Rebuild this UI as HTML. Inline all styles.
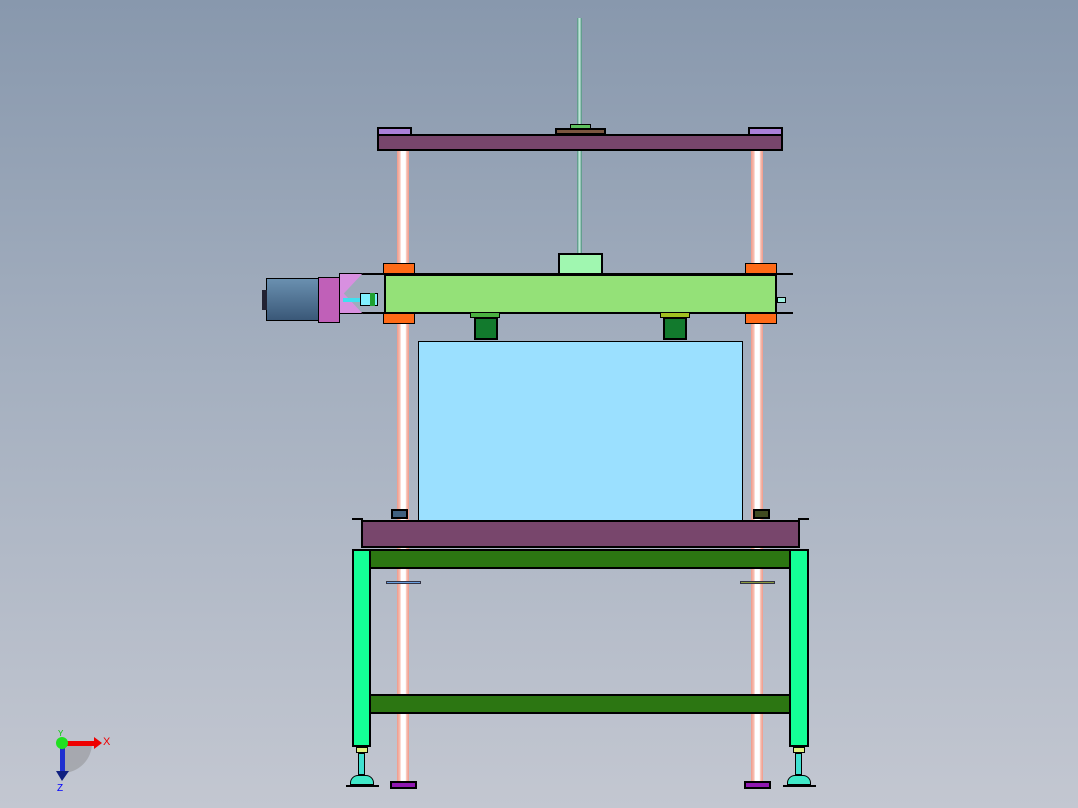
<!DOCTYPE html>
<html><head><style>
body{margin:0;width:1078px;height:808px;overflow:hidden;background:linear-gradient(#8898ad,#a4afbf 45%,#c3c7d1);position:relative;font-family:"Liberation Sans",sans-serif}
div{position:absolute;box-sizing:border-box}
.b{border:2px solid #000}
.col{width:12px;background:linear-gradient(90deg,#f09a8a 0,#f6c0b4 25%,#fff 35%,#fff 70%,#f6c0b4 80%,#f09a8a 100%)}
</style></head><body>
<!-- columns -->
<div class="col" style="left:397px;top:151px;height:632px"></div>
<div class="col" style="left:751px;top:151px;height:632px"></div>
<!-- center rod -->
<div style="left:577px;top:18px;width:5px;height:236px;background:linear-gradient(90deg,#4a8a7a,#c8f0e0,#4a8a7a)"></div>
<!-- top plate -->
<div class="b" style="left:377px;top:127px;width:35px;height:9px;background:#aa80d8"></div>
<div class="b" style="left:748px;top:127px;width:35px;height:9px;background:#aa80d8"></div>
<div class="b" style="left:570px;top:124px;width:21px;height:6px;background:#5fc060;border-width:1px"></div>
<div class="b" style="left:555px;top:128px;width:51px;height:7px;background:#7b5640"></div>
<div class="b" style="left:377px;top:134px;width:406px;height:17px;background:#78466c"></div>
<!-- carriage -->
<div class="b" style="left:558px;top:253px;width:45px;height:22px;background:#a0f7b0"></div>
<div style="left:383px;top:263px;width:32px;height:11px;background:#ff6a16;border:1px solid #000"></div>
<div style="left:383px;top:313px;width:32px;height:11px;background:#ff6a16;border:1px solid #000"></div>
<div style="left:745px;top:263px;width:32px;height:11px;background:#ff6a16;border:1px solid #000"></div>
<div style="left:745px;top:313px;width:32px;height:11px;background:#ff6a16;border:1px solid #000"></div>
<div style="left:355px;top:273px;width:438px;height:2px;background:#000"></div>
<div style="left:355px;top:312px;width:438px;height:2px;background:#000"></div>
<div class="b" style="left:384px;top:274px;width:393px;height:40px;background:#94e178"></div>
<div style="left:777px;top:297px;width:9px;height:6px;background:#a0f0e0;border:1px solid #000"></div>
<!-- motor -->
<div style="left:266px;top:278px;width:55px;height:43px;background:linear-gradient(#6a90b0,#3a5878);border:1px solid #000"></div>
<div style="left:262px;top:290px;width:5px;height:20px;background:#223;"></div>
<div style="left:318px;top:277px;width:22px;height:46px;background:#c060b8;border:1px solid #000"></div>
<div style="left:339px;top:273px;width:24px;height:41px;background:#d890e0;border:1px solid #000;clip-path:polygon(0 0,100% 0,20% 50%,100% 100%,0 100%)"></div>
<div style="left:343px;top:298px;width:20px;height:4px;background:#40e0f0"></div>
<div style="left:360px;top:293px;width:18px;height:13px;background:#80f0ff;border:1px solid #000"></div>
<div style="left:370px;top:293px;width:5px;height:13px;background:#20a030"></div>
<!-- green feet -->
<div class="b" style="left:470px;top:312px;width:30px;height:6px;background:#4ab040;border-width:1px"></div>
<div class="b" style="left:474px;top:317px;width:24px;height:23px;background:#127a2d"></div>
<div class="b" style="left:660px;top:312px;width:30px;height:6px;background:#a0c020;border-width:1px"></div>
<div class="b" style="left:663px;top:317px;width:24px;height:23px;background:#127a2d"></div>
<!-- blue box -->
<div style="left:418px;top:341px;width:325px;height:181px;background:#9be0ff;border:1px solid #000"></div>
<!-- small blocks -->
<div class="b" style="left:391px;top:509px;width:17px;height:10px;background:#40607f"></div>
<div class="b" style="left:753px;top:509px;width:17px;height:10px;background:#404a20"></div>
<!-- table -->
<div class="b" style="left:361px;top:520px;width:439px;height:28px;background:#78466c"></div>
<div style="left:352px;top:518px;width:11px;height:2px;background:#000"></div>
<div style="left:798px;top:518px;width:11px;height:2px;background:#000"></div>
<!-- beams -->
<div class="b" style="left:368px;top:549px;width:424px;height:20px;background:#2c7612"></div>
<div class="b" style="left:368px;top:694px;width:424px;height:20px;background:#2c7612"></div>
<div style="left:386px;top:581px;width:35px;height:3px;background:#6aa0e0;border:1px solid #334"></div>
<div style="left:740px;top:581px;width:35px;height:3px;background:#8a9a40;border:1px solid #334"></div>
<!-- legs -->
<div class="b" style="left:352px;top:549px;width:19px;height:198px;background:#14ff96"></div>
<div class="b" style="left:789px;top:549px;width:20px;height:198px;background:#14ff96"></div>
<!-- leveling feet -->
<div style="left:356px;top:747px;width:12px;height:6px;background:#e0f080;border:1px solid #000"></div>
<div style="left:358px;top:753px;width:7px;height:22px;background:#40e0d0;border:1px solid #000"></div>
<div style="left:350px;top:775px;width:24px;height:10px;background:#40e8c8;border:1px solid #000;border-radius:8px 8px 0 0"></div>
<div style="left:346px;top:785px;width:33px;height:2px;background:#000"></div>
<div style="left:793px;top:747px;width:12px;height:6px;background:#e0f080;border:1px solid #000"></div>
<div style="left:795px;top:753px;width:7px;height:22px;background:#40e0d0;border:1px solid #000"></div>
<div style="left:787px;top:775px;width:24px;height:10px;background:#40e8c8;border:1px solid #000;border-radius:8px 8px 0 0"></div>
<div style="left:783px;top:785px;width:33px;height:2px;background:#000"></div>
<div class="b" style="left:390px;top:781px;width:27px;height:8px;background:#9018b0"></div>
<div class="b" style="left:744px;top:781px;width:27px;height:8px;background:#9018b0"></div>
<!-- triad -->
<svg style="position:absolute;left:40px;top:725px" width="80" height="70">
<path d="M22 18 L22 48 A30 30 0 0 0 52 18 Z" fill="#888" opacity=".45"/>
<rect x="22" y="16" width="32" height="5" fill="#e00"/><polygon points="54,12 62,18 54,24" fill="#e00"/>
<rect x="20" y="18" width="5" height="30" fill="#2030d0"/><polygon points="16,46 29,46 22,56" fill="#102080"/>
<circle cx="22" cy="18" r="6" fill="#20e020"/>
<text x="63" y="20" font-size="11" fill="#e00">X</text>
<text x="17" y="66" font-size="10" fill="#00f">Z</text>
<text x="18" y="11" font-size="8" fill="#0c0">Y</text>
</svg>
</body></html>
